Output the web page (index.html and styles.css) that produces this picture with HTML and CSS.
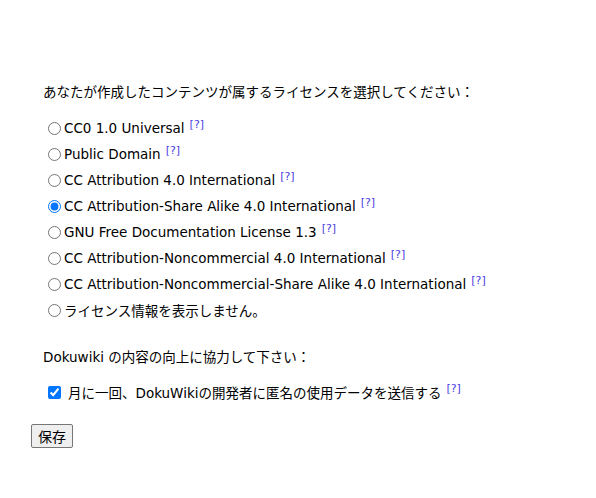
FILE: index.html
```html
<!DOCTYPE html>
<html lang="ja">
<head>
<meta charset="utf-8">
<link rel="stylesheet" href="styles.css">
</head>
<body>
<form class="form">
  <div class="section">
    <p class="title">あなたが作成したコンテンツが属するライセンスを選択してください：</p>
    <div class="options">
      <label class="opt"><input type="radio" name="lic"><span>CC0 1.0 Universal</span><sup class="help">[?]</sup></label>
      <label class="opt"><input type="radio" name="lic"><span>Public Domain</span><sup class="help">[?]</sup></label>
      <label class="opt"><input type="radio" name="lic"><span>CC Attribution 4.0 International</span><sup class="help">[?]</sup></label>
      <label class="opt"><input type="radio" name="lic" checked><span>CC Attribution-Share Alike 4.0 International</span><sup class="help">[?]</sup></label>
      <label class="opt"><input type="radio" name="lic"><span>GNU Free Documentation License 1.3</span><sup class="help">[?]</sup></label>
      <label class="opt"><input type="radio" name="lic"><span>CC Attribution-Noncommercial 4.0 International</span><sup class="help">[?]</sup></label>
      <label class="opt"><input type="radio" name="lic"><span>CC Attribution-Noncommercial-Share Alike 4.0 International</span><sup class="help">[?]</sup></label>
      <label class="opt"><input type="radio" name="lic"><span>ライセンス情報を表示しません。</span></label>
    </div>
  </div>
  <div class="section">
    <p class="title">Dokuwiki の内容の向上に協力して下さい：</p>
    <label class="check"><input type="checkbox" checked><span>月に一回、DokuWikiの開発者に匿名の使用データを送信する</span><sup class="help">[?]</sup></label>
  </div>
  <div class="actions"><button type="button" class="save">保存</button></div>
</form>
</body>
</html>
```
FILE: styles.css
```css
html, body { margin: 0; padding: 0; background: #fff; }
body {
  font-family: "DejaVu Sans", Verdana, "Noto Sans CJK JP", sans-serif;
  font-size: 13.5px;
  color: #000;
}
.form { padding: 80px 0 0 31px; }
.section { padding-left: 12px; }
.title { margin: 0; line-height: 24px; }
.options { display: flex; flex-direction: column; margin-top: 11px; }
.opt { display: flex; align-items: center; height: 26px; }
.opt input { margin: 0 3px 0 5px; width: 13px; height: 13px; flex: none; }
.help {
  color: #4a3ce0;
  font-size: 11px;
  margin-left: 5px;
  position: relative;
  top: -4px;
}
.section + .section { margin-top: 22px; }
.check { display: flex; align-items: center; height: 26px; margin-top: 10px; }
.check input { margin: 0 7px 0 5px; width: 13px; height: 13px; flex: none; }
.actions { margin-top: 19px; }
.save {
  font-family: "Noto Sans CJK JP", sans-serif;
  font-size: 14px;
  box-sizing: border-box;
  width: 42px;
  height: 24px;
  padding: 0;
  border: 1px solid #767676;
  border-radius: 2px;
  background: #efefef;
  color: #000;
}
```
